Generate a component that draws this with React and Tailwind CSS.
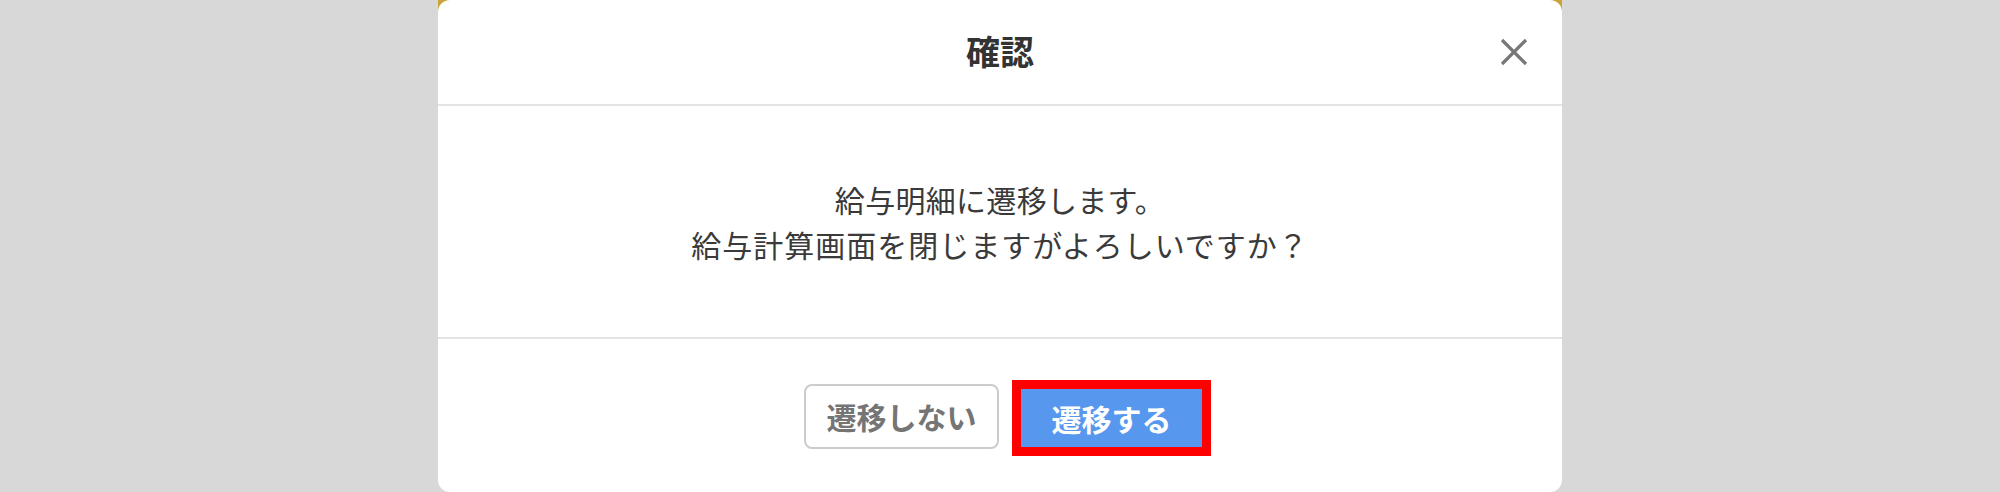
export default function App() {
  const font = { fontFamily: '"Noto Sans CJK JP", "Noto Sans", sans-serif' };
  return (
    <div className="w-[2000px] h-[492px] bg-[#d8d8d8] pl-[438px] overflow-hidden" style={font}>
      <div className="relative w-[1124px] h-[492px]">
        <div className="absolute left-0 right-0 top-0 h-[12px] bg-[#c9a43a]" />
        <div className="relative flex flex-col w-[1124px] h-[492px] bg-white rounded-[12px]">
          <div className="relative h-[106px] shrink-0 flex items-center justify-center border-b-2 border-[#e4e4e4]">
            <span className="text-[34px] font-bold text-[#333333] leading-none pb-[2px]">確認</span>
            <button className="absolute right-[33px] top-[37px] w-[30px] h-[30px] flex items-center justify-center">
              <svg width="30" height="30" viewBox="0 0 30 30">
                <path d="M3 3 L27 27 M27 3 L3 27" stroke="#777777" strokeWidth="3.2" strokeLinecap="butt" fill="none" />
              </svg>
            </button>
          </div>
          <div className="h-[233px] shrink-0 flex flex-col items-center justify-center text-[30px] leading-[45px] text-[#3a3a3a] border-b-2 border-[#e4e4e4]">
            <p className="tracking-[0.3px]">給与明細に遷移します。</p>
            <p className="tracking-[1px]">給与計算画面を閉じますがよろしいですか？</p>
          </div>
          <div className="flex-1 flex items-start pt-[45px] pl-[366px]">
            <button className="w-[195px] h-[65px] border-2 border-[#cccccc] rounded-[8px] bg-white text-[30px] font-bold text-[#757575] flex items-center justify-center">
              遷移しない
            </button>
            <button className="ml-[22px] mt-[5px] w-[181px] h-[58px] bg-[#5897ee] text-white text-[30px] font-bold flex items-center justify-center outline-[9px] outline-solid outline-[#ff0000]">
              遷移する
            </button>
          </div>
        </div>
      </div>
    </div>
  );
}
